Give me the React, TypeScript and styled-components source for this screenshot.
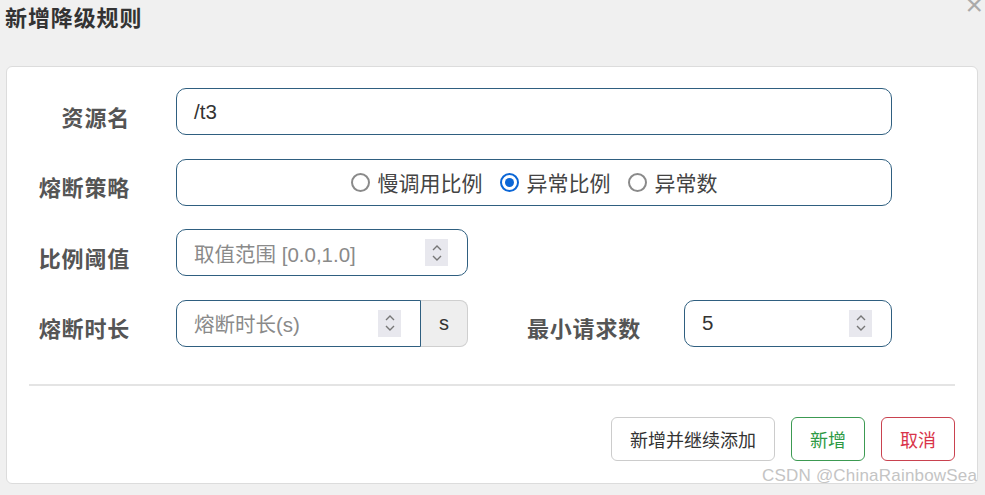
import React, { useState } from "react"
import styled, { createGlobalStyle } from "styled-components"

const GlobalStyle = createGlobalStyle`
  html, body {
    margin: 0;
    padding: 0;
    background: #f0f0f0;
    font-family: "Liberation Sans", "Noto Sans CJK SC", sans-serif;
  }
`

const Page = styled.div`
  position: relative;
  width: 985px;
  height: 495px;
  overflow: hidden;
  background: #f0f0f0;
`

const Header = styled.div`
  height: 66px;
  padding: 5px 0 0 5px;
  box-sizing: border-box;
`

const Title = styled.h4`
  margin: 0;
  font-size: 22px;
  font-weight: 700;
  color: #333;
  letter-spacing: 0.9px;
  line-height: 28px;
`

const Close = styled.span`
  position: absolute;
  top: -12px;
  right: 2px;
  font-size: 30px;
  color: #aaa;
  font-family: "Liberation Sans", sans-serif;
`

const Card = styled.div`
  margin-left: 6px;
  width: 972px;
  height: 418px;
  box-sizing: border-box;
  background: #fff;
  border: 1px solid #dcdcdc;
  border-radius: 6px;
  padding-top: 21px;
`

const Form = styled.div`
  display: flex;
  flex-direction: column;
  gap: 23.5px;
`

const Row = styled.div`
  display: flex;
  align-items: center;
  height: 47px;
`

const Label = styled.label<{ $w?: number; $gap?: number }>`
  width: ${(p) => p.$w ?? 123}px;
  margin-right: ${(p) => p.$gap ?? 46}px;
  text-align: right;
  font-size: 22px;
  font-weight: 700;
  color: #555;
  padding-top: 8px;
  letter-spacing: 0.8px;
  white-space: nowrap;
`

const Field = styled.div<{ $w: number; $group?: boolean }>`
  position: relative;
  width: ${(p) => p.$w}px;
  height: 47px;
  box-sizing: border-box;
  border: 1px solid #2f5f80;
  border-radius: ${(p) => (p.$group ? "10px 0 0 10px" : "10px")};
  display: flex;
  align-items: center;
  padding: 0 17px;
  background: #fff;
`

const Value = styled.span<{ $placeholder?: boolean }>`
  flex: 1;
  font-size: 20.5px;
  color: ${(p) => (p.$placeholder ? "#8a8a8a" : "#333")};
  white-space: nowrap;
`

const Spinner = styled.div`
  width: 23px;
  height: 27px;
  background: #e8e8ee;
  display: flex;
  align-items: center;
  justify-content: center;
  margin-right: 2px;
`

const Addon = styled.div`
  width: 47px;
  height: 47px;
  box-sizing: border-box;
  border: 1px solid #cfcfcf;
  border-left: none;
  border-radius: 0 8px 8px 0;
  background: #eeeeee;
  display: flex;
  align-items: center;
  justify-content: center;
  font-size: 20px;
  color: #333;
`

const RadioGroup = styled.div`
  flex: 1;
  display: flex;
  justify-content: center;
  align-items: center;
  gap: 17px;
`

const RadioItem = styled.label`
  display: flex;
  align-items: center;
  gap: 8px;
  font-size: 21px;
  color: #444;
  cursor: pointer;
`

const Circle = styled.span<{ $on?: boolean }>`
  width: 19px;
  height: 19px;
  box-sizing: border-box;
  border-radius: 50%;
  border: 2px solid ${(p) => (p.$on ? "#0b66d6" : "#8a8a8a")};
  display: flex;
  align-items: center;
  justify-content: center;
  &::after {
    content: "";
    width: 9px;
    height: 9px;
    border-radius: 50%;
    background: ${(p) => (p.$on ? "#0b66d6" : "transparent")};
  }
`

const Divider = styled.div`
  margin: 37px 22px 0 22px;
  height: 2px;
  background: #e4e4e4;
`

const Footer = styled.div`
  display: flex;
  justify-content: flex-end;
  gap: 16px;
  padding: 31px 22px 0 0;
`

const Button = styled.button<{ $tone?: "green" | "red" }>`
  height: 44px;
  padding: 0 18px;
  background: #fff;
  border-radius: 6px;
  font-family: "Liberation Sans", "Noto Sans CJK SC", sans-serif;
  font-size: 18px;
  border: 1px solid
    ${(p) => (p.$tone === "green" ? "#3c9a52" : p.$tone === "red" ? "#c9424f" : "#cccccc")};
  color: ${(p) => (p.$tone === "green" ? "#2e9a45" : p.$tone === "red" ? "#d9344a" : "#333")};
  cursor: pointer;
`

const Watermark = styled.div`
  position: absolute;
  left: 762px;
  top: 466px;
  font-size: 17px;
  color: #c4c4c4;
  letter-spacing: 0.2px;
  white-space: nowrap;
`

const Arrows = () => (
  <svg width="14" height="20" viewBox="0 0 14 20" fill="none" stroke="#777" strokeWidth="1.4">
    <polyline points="3,7 7,3 11,7" />
    <polyline points="3,13 7,17 11,13" />
  </svg>
)

export default function App() {
  const [grade, setGrade] = useState(1)
  const grades = ["慢调用比例", "异常比例", "异常数"]

  return (
    <Page>
      <GlobalStyle />
      <Header>
        <Title>新增降级规则</Title>
      </Header>
      <Close>×</Close>
      <Card>
        <Form>
          <Row>
            <Label>资源名</Label>
            <Field $w={716}>
              <Value>/t3</Value>
            </Field>
          </Row>
          <Row>
            <Label>熔断策略</Label>
            <Field $w={716}>
              <RadioGroup>
                {grades.map((g, i) => (
                  <RadioItem key={g} onClick={() => setGrade(i)}>
                    <Circle $on={grade === i} />
                    {g}
                  </RadioItem>
                ))}
              </RadioGroup>
            </Field>
          </Row>
          <Row>
            <Label>比例阈值</Label>
            <Field $w={292}>
              <Value $placeholder>取值范围 [0.0,1.0]</Value>
              <Spinner><Arrows /></Spinner>
            </Field>
          </Row>
          <Row>
            <Label>熔断时长</Label>
            <Field $w={245} $group>
              <Value $placeholder>熔断时长(s)</Value>
              <Spinner><Arrows /></Spinner>
            </Field>
            <Addon>s</Addon>
            <Label $w={173} $gap={43}>最小请求数</Label>
            <Field $w={208}>
              <Value>5</Value>
              <Spinner><Arrows /></Spinner>
            </Field>
          </Row>
        </Form>
        <Divider />
        <Footer>
          <Button>新增并继续添加</Button>
          <Button $tone="green">新增</Button>
          <Button $tone="red">取消</Button>
        </Footer>
      </Card>
      <Watermark>CSDN @ChinaRainbowSea</Watermark>
    </Page>
  )
}
